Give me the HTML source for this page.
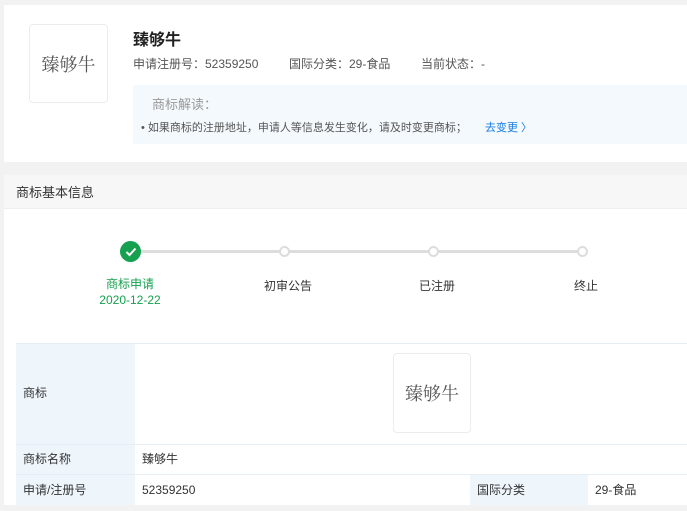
<!DOCTYPE html>
<html><head><meta charset="utf-8"><style>
*{margin:0;padding:0;box-sizing:border-box}
body{width:687px;height:511px;overflow:hidden;background:#f2f2f2;font-family:"Liberation Sans","Noto Sans CJK SC",sans-serif;color:#333;position:relative}
.a{position:absolute}
.logo{border:1px solid #ececec;border-radius:4px;background:#fff;display:flex;align-items:center;justify-content:center;font-family:"Noto Serif CJK SC",serif;color:#555;font-size:18px}
.t{font-size:12px;white-space:nowrap;line-height:17px}
</style></head><body>
<div class="a" style="left:4px;top:5px;width:683px;height:157px;background:#fff"></div>
<div class="a logo" style="left:29px;top:24px;width:79px;height:79px">臻够牛</div>
<div class="a" style="left:133px;top:26px;font-size:16px;font-weight:bold;color:#222">臻够牛</div>
<div class="a t" style="left:133px;top:56px;color:#555">申请注册号：52359250</div>
<div class="a t" style="left:289px;top:56px;color:#555">国际分类：29-食品</div>
<div class="a t" style="left:421px;top:56px;color:#555">当前状态：-</div>
<div class="a" style="left:133px;top:85px;width:554px;height:59px;background:#f4f9fe"></div>
<div class="a t" style="left:152px;top:96px;color:#999;font-size:13px">商标解读：</div>
<div class="a t" style="left:141px;top:120px;color:#555;font-size:11px">• 如果商标的注册地址，申请人等信息发生变化，请及时变更商标；</div>
<div class="a t" style="left:485px;top:120px;color:#1a7ee0;font-size:11px">去变更 〉</div>

<div class="a" style="left:4px;top:175px;width:683px;height:336px;background:#fff"></div>
<div class="a" style="left:4px;top:175px;width:683px;height:34px;background:#f7f7f7;border-bottom:1px solid #eee"></div>
<div class="a t" style="left:16px;top:184px;font-size:13px;color:#333">商标基本信息</div>

<div class="a" style="left:130px;top:250px;width:452px;height:3px;background:#ddd"></div>
<div class="a" style="left:120px;top:241px;width:21px;height:21px;border-radius:50%;background:#17a04f;display:flex;align-items:center;justify-content:center">
<svg width="12" height="10" viewBox="0 0 12 10"><path d="M1.5 5 L4.5 8 L10.5 1.5" stroke="#fff" stroke-width="2" fill="none"/></svg></div>
<div class="a" style="left:279px;top:246px;width:11px;height:11px;border-radius:50%;background:#fff;border:2px solid #ddd"></div>
<div class="a" style="left:428px;top:246px;width:11px;height:11px;border-radius:50%;background:#fff;border:2px solid #ddd"></div>
<div class="a" style="left:577px;top:246px;width:11px;height:11px;border-radius:50%;background:#fff;border:2px solid #ddd"></div>
<div class="a t" style="left:100px;top:276px;width:60px;text-align:center;color:#17a04f">商标申请</div>
<div class="a t" style="left:95px;top:292px;width:70px;text-align:center;color:#17a04f">2020-12-22</div>
<div class="a t" style="left:258px;top:278px;width:60px;text-align:center">初审公告</div>
<div class="a t" style="left:407px;top:278px;width:60px;text-align:center">已注册</div>
<div class="a t" style="left:556px;top:278px;width:60px;text-align:center">终止</div>

<div class="a" style="left:16px;top:343px;width:671px;height:163px;border-top:1px solid #e6eef5"></div>
<div class="a" style="left:16px;top:344px;width:119px;height:162px;background:#eef6fc"></div>
<div class="a" style="left:470px;top:475px;width:118px;height:31px;background:#eef6fc"></div>
<div class="a" style="left:16px;top:444px;width:671px;height:1px;background:#e6eef5"></div>
<div class="a" style="left:16px;top:474px;width:671px;height:1px;background:#e6eef5"></div>
<div class="a" style="left:0;top:505px;width:687px;height:6px;background:#f2f2f2"></div>
<div class="a logo" style="left:393px;top:353px;width:78px;height:80px">臻够牛</div>
<div class="a t" style="left:23px;top:385px">商标</div>
<div class="a t" style="left:23px;top:451px">商标名称</div>
<div class="a t" style="left:142px;top:451px">臻够牛</div>
<div class="a t" style="left:23px;top:482px">申请/注册号</div>
<div class="a t" style="left:142px;top:482px">52359250</div>
<div class="a t" style="left:477px;top:482px">国际分类</div>
<div class="a t" style="left:595px;top:482px">29-食品</div>
</body></html>
